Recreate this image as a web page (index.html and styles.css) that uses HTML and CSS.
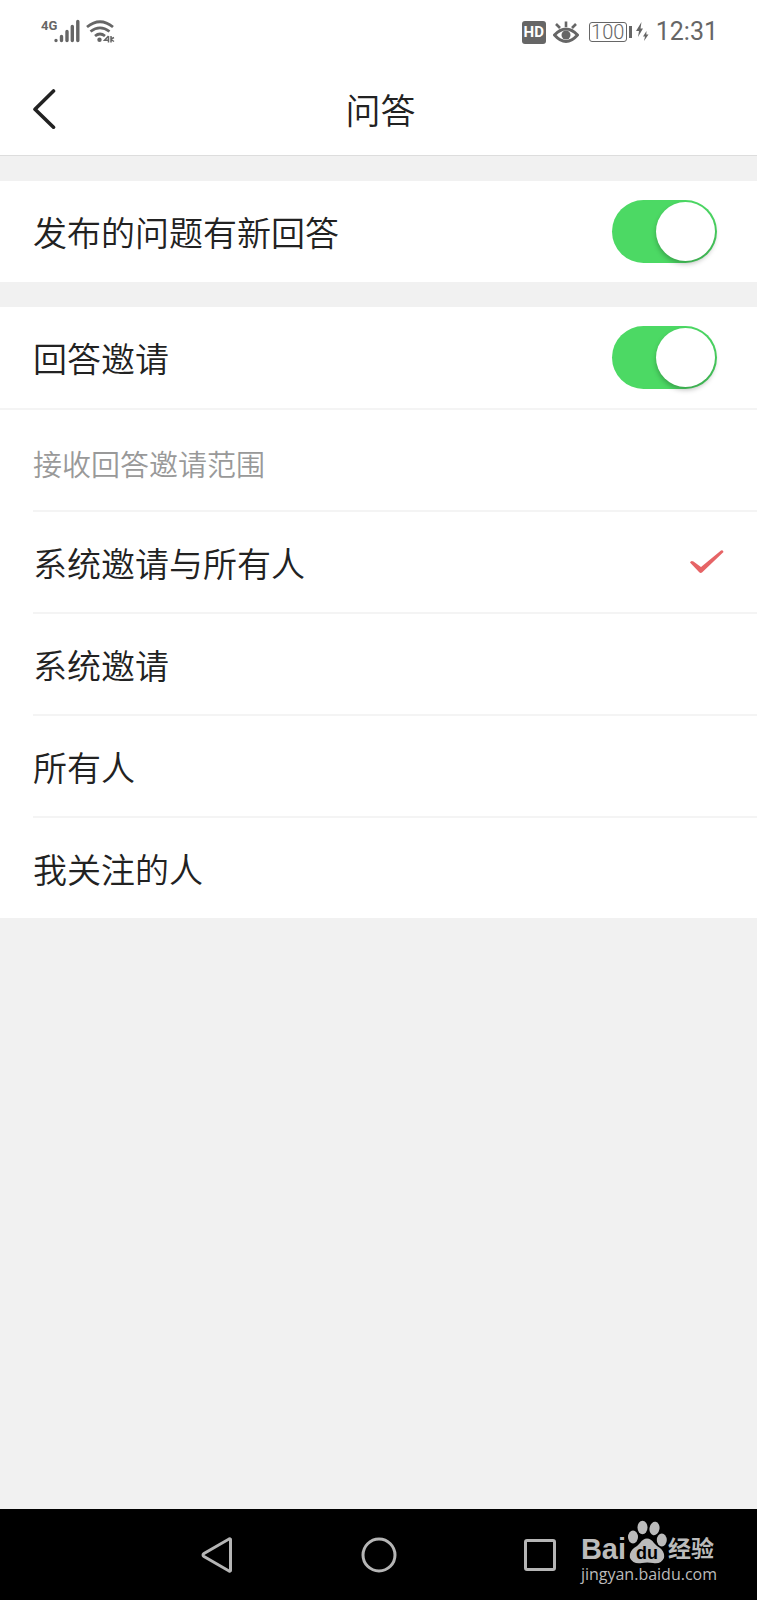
FILE: index.html
```
<!DOCTYPE html>
<html lang="zh-CN">
<head>
<meta charset="utf-8">
<meta name="viewport" content="width=device-width, initial-scale=1">
<title>问答</title>
<link rel="stylesheet" href="styles.css">
</head>
<body>
<div class="screen">
  <div class="status">
    <div class="status-group">
      <svg class="signal" width="74" height="28" viewBox="0 0 74 28" aria-hidden="true">
        <text class="network" x="0" y="12">4G</text>
        <g stroke="#666" stroke-width="3.4" stroke-linecap="round">
          <path d="M15 22.400v.2M20.500 18.500v4M26 13.500v9M31.300 8.500v14M36.800 3.500v19"/>
        </g>
        <g fill="none" stroke="#666" stroke-width="2.800">
          <path d="M46 9q13-10.500 26 0M49.500 13.500q9.500-7.200 19 0M54 18q5-4 10 0"/>
        </g>
        <circle cx="58.500" cy="21.800" r="2.200" fill="#666"/>
        <path d="M67.500 18v6.500M67.500 18l-4 4.300h4M70 18v6.500M70 21l3-1.500M70 21.500l3 2" fill="none" stroke="#666" stroke-width="1.500"/>
      </svg>
    </div>
    <div class="status-group status-right">
      <span class="hd">HD</span>
      <svg width="26" height="24" viewBox="0 0 26 24" aria-hidden="true">
        <path d="M1.500 15Q13 3 24.500 15Q13 28 1.500 15z" fill="none" stroke="#666" stroke-width="3"/>
        <circle cx="13" cy="15" r="4.500" fill="#666"/>
        <path d="M13 7V1.500M7 8L3 4M19 8l4-4" stroke="#666" stroke-width="2.600"/>
      </svg>
      <span class="battery"><span class="battery-level">100</span><span class="battery-tip"></span>
        <svg width="13" height="20" viewBox="0 0 13 20" aria-hidden="true">
          <path d="M5.500 0L0 9h3L2 15l5-8.500H4.500zM10.500 9L7 14.500h2L8 19l4.500-6.500h-2.200z" fill="#666"/>
        </svg>
      </span>
      <time class="clock">12:31</time>
    </div>
  </div>

  <header class="header">
    <button class="back" type="button" aria-label="返回">
      <svg width="24" height="42" viewBox="0 0 24 42" aria-hidden="true">
        <path d="M20.500 2L2 20.200l18.500 18" fill="none" stroke="#222" stroke-width="3.600" stroke-linecap="round" stroke-linejoin="round"/>
      </svg>
    </button>
    <h1 class="title">问答</h1>
  </header>

  <main class="settings">
    <section class="group">
      <label class="row"><span>发布的问题有新回答</span><input class="switch" type="checkbox" role="switch" checked></label>
    </section>
    <section class="group">
      <label class="row"><span>回答邀请</span><input class="switch" type="checkbox" role="switch" checked></label>
      <fieldset class="scope">
        <legend class="scope-title">接收回答邀请范围</legend>
        <label class="option"><span>系统邀请与所有人</span><input class="radio" type="radio" name="scope" checked>
          <svg class="check" width="36" height="26" viewBox="0 0 36 26" aria-hidden="true">
            <path d="M1 13.500Q2 11 4.500 12.500L12 18L32 1.500Q34 .5 34.500 3L13 23.500Q11.500 24.500 10 23z" fill="#e66466"/>
          </svg>
        </label>
        <label class="option"><span>系统邀请</span><input class="radio" type="radio" name="scope"></label>
        <label class="option"><span>所有人</span><input class="radio" type="radio" name="scope"></label>
        <label class="option"><span>我关注的人</span><input class="radio" type="radio" name="scope"></label>
      </fieldset>
    </section>
  </main>

  <nav class="navbar">
    <button class="nav-key" type="button" aria-label="返回">
      <svg width="36" height="36" viewBox="0 0 36 36"><path d="M30.500 2.500v31Q30.500 34.500 29 34L4 19.500Q2 18 4 16.500L29 2Q30.500 1.500 30.500 2.500z"/></svg>
    </button>
    <button class="nav-key" type="button" aria-label="主页">
      <svg width="36" height="36" viewBox="0 0 36 36"><circle cx="18" cy="18" r="16"/></svg>
    </button>
    <button class="nav-key" type="button" aria-label="最近任务">
      <svg width="36" height="36" viewBox="0 0 36 36"><rect x="3.500" y="3.500" width="29" height="29" rx="1.500"/></svg>
    </button>
    <div class="watermark">
      <div class="brand">
        <span class="brand-latin">Bai</span>
        <span class="paw">
          <svg width="40" height="44" viewBox="0 0 40 44" aria-hidden="true">
            <g fill="#bbb">
              <ellipse cx="6" cy="17" rx="5" ry="6.500"/>
              <ellipse cx="15.500" cy="7.500" rx="5" ry="6.800"/>
              <ellipse cx="27.500" cy="8.500" rx="5" ry="6.800" transform="rotate(10 27.500 8.500)"/>
              <ellipse cx="34.800" cy="20" rx="5" ry="6.500"/>
              <path d="M20 18.500Q24 18.500 27 23Q29 25.500 33 28Q38 32 37 38Q34 44.500 26 43Q20 42 15 43Q6 44.500 3 38Q2 32 7 28Q11 25.500 13 23Q16 18.500 20 18.500z"/>
            </g>
          </svg>
          <span class="paw-text">du</span>
        </span>
        <span class="brand-cn">经验</span>
      </div>
      <div class="site">jingyan.baidu.com</div>
    </div>
  </nav>
</div>
</body>
</html>
```

FILE: styles.css
```
* { box-sizing: border-box; }

body {
  margin: 0;
  background: #f1f1f1;
  color: #222;
  font-family: Roboto, "Noto Sans CJK SC", sans-serif;
  font-weight: 350;
}

button { padding: 0; border: 0; background: none; }
svg { display: block; flex: none; }

.screen {
  display: flex;
  flex-direction: column;
  min-height: 100vh;
}

.status {
  display: flex;
  align-items: center;
  justify-content: space-between;
  height: 64px;
  padding: 0 39px 0 41px;
  background: #fff;
  color: #666;
}
.status-group { display: flex; align-items: center; }
.status-right { gap: 7px; }
.network { fill: #666; font: 700 13px Roboto, sans-serif; }
.hd {
  width: 24px;
  border-radius: 3px;
  background: #666;
  color: #fff;
  font-size: 15px;
  font-weight: 700;
  line-height: 23px;
  text-align: center;
}
.battery { display: flex; align-items: center; gap: 2px; margin-left: 3px; }
.battery-level {
  width: 38px;
  border: 1px solid #666;
  border-radius: 3px;
  font-size: 20px;
  font-weight: 350;
  line-height: 18px;
  text-align: center;
}
.battery-tip { width: 3px; height: 12px; background: #666; }
.battery svg { margin-left: 2px; }
.clock { font-size: 25px; font-weight: 400; line-height: 32px; }

.header {
  display: grid;
  grid-template-columns: 1fr auto 1fr;
  align-items: center;
  height: 92px;
  padding: 0 29px 0 33px;
  border-bottom: 1px solid #ddd;
  background: #fff;
}
.back { justify-self: start; }
.title { margin: 0; padding-top: 6px; font-size: 35px; font-weight: 350; line-height: 48px; }

.settings { flex: 1; }
.group { margin-top: 25px; background: #fff; }
.row {
  display: flex;
  align-items: center;
  justify-content: space-between;
  height: 101px;
  padding: 0 40px 0 33px;
  font-size: 34px;
}
.switch {
  appearance: none;
  display: flex;
  align-items: center;
  justify-content: flex-end;
  width: 105px;
  height: 63px;
  margin: 0;
  padding: 2px;
  border-radius: 32px;
  background: #4cd964;
}
.switch::before {
  content: "";
  width: 59px;
  height: 59px;
  border-radius: 50%;
  background: #fff;
  box-shadow: 0 3px 5px rgba(0, 0, 0, .25);
}
.switch:not(:checked) { justify-content: flex-start; background: #ddd; }

.scope {
  min-width: 0;
  margin: 0;
  padding: 0 0 0 33px;
  border: 0;
  border-top: 2px solid #f4f4f4;
}
.scope-title {
  float: left;
  width: 100%;
  height: 100px;
  padding: 12px 0 0;
  color: #999;
  font-size: 29px;
  line-height: 88px;
}
.option {
  display: flex;
  clear: both;
  align-items: center;
  justify-content: space-between;
  height: 102px;
  padding-right: 32px;
  border-top: 2px solid #f4f4f4;
  font-size: 34px;
}
.radio { appearance: none; margin: 0; }
.option span { flex: 1; }
.check { visibility: hidden; }
.radio:checked + .check { visibility: visible; }

.navbar {
  position: relative;
  display: flex;
  align-items: center;
  justify-content: center;
  gap: 125px;
  height: 91px;
  background: #000;
}
.nav-key svg { fill: none; stroke: #b5b5b5; stroke-width: 3; }
.watermark {
  position: absolute;
  right: 40px;
  bottom: 16px;
  color: #bbb;
}
.brand { display: flex; align-items: flex-end; gap: 1px; }
.brand-latin { font-family: "Liberation Sans", sans-serif; font-size: 29px; font-weight: 700; line-height: 30px; }
.paw { position: relative; }
.paw-text {
  position: absolute;
  right: 0;
  bottom: 1px;
  left: 0;
  color: #000;
  font-family: "Liberation Sans", sans-serif;
  font-size: 18px;
  font-weight: 700;
  line-height: 20px;
  text-align: center;
}
.brand-cn { font-size: 23px; font-weight: 700; line-height: 28px; }
.site { font-family: "Open Sans", sans-serif; font-size: 16px; font-weight: 400; line-height: 20px; }
```
